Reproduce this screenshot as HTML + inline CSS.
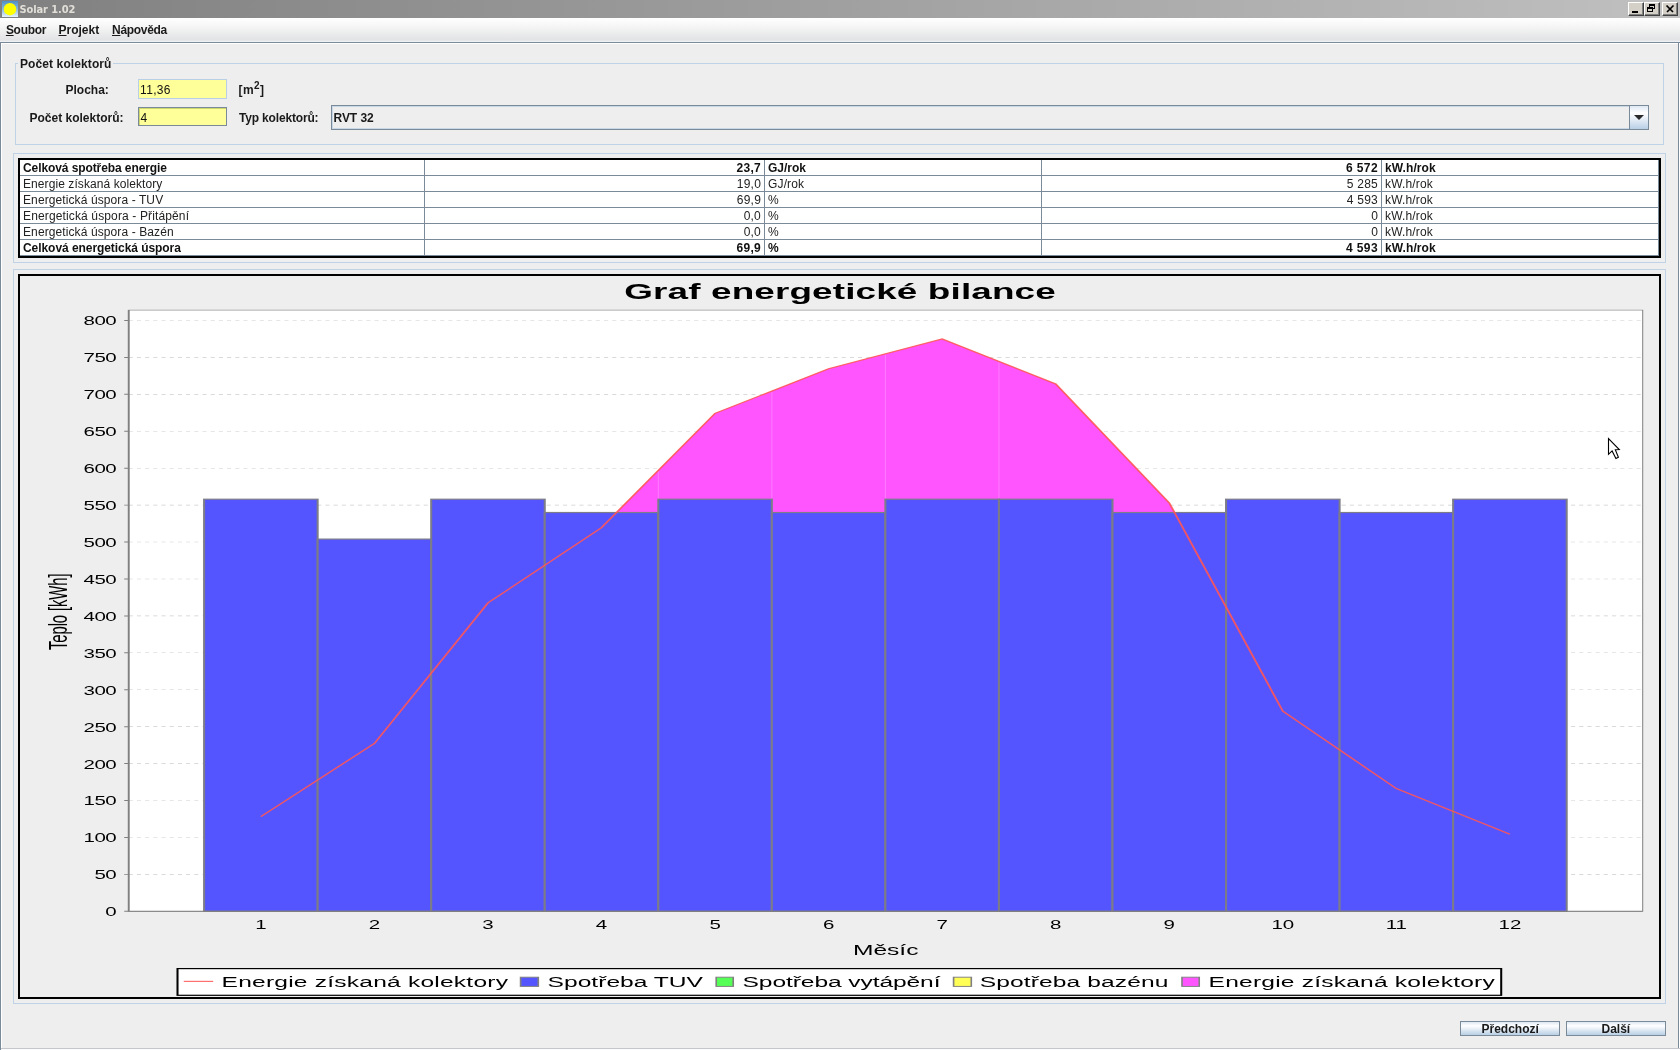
<!DOCTYPE html>
<html lang="cs"><head><meta charset="utf-8"><title>Solar 1.02</title>
<style>
html,body{margin:0;padding:0;background:#eee;}
body{width:1680px;height:1050px;overflow:hidden;position:relative;font-family:"Liberation Sans",sans-serif;font-size:12px;color:#000;}
#win{position:absolute;left:0;top:0;width:1680px;height:1050px;background:#eee;overflow:hidden;will-change:transform;}
.abs{position:absolute;}
.t{position:absolute;white-space:nowrap;line-height:14px;font-size:12px;color:#222;}
.b{font-weight:bold;color:#1a1a1a;}
#titlebar{position:absolute;left:0;top:0;width:1680px;height:18px;background:linear-gradient(to right,#808080 0%,#c0c0c0 100%);}
#titlebar .cap{position:absolute;left:19.5px;top:3px;line-height:14px;font-family:"DejaVu Sans Condensed","Liberation Sans",sans-serif;font-size:11px;font-weight:bold;color:#e2dfd8;white-space:nowrap;}
.wbtn{position:absolute;top:2px;width:16px;height:14px;background:#d4d0c8;box-sizing:border-box;border-top:1px solid #fff;border-left:1px solid #fff;border-right:1px solid #404040;border-bottom:1px solid #404040;}
.wbtn:after{content:"";position:absolute;left:0;top:0;right:0;bottom:0;border-right:1px solid #808080;border-bottom:1px solid #808080;}
.wbtn svg{position:absolute;left:0;top:0;}
#menubar{position:absolute;left:0;top:18px;width:1680px;height:24px;background:linear-gradient(to bottom,#ffffff 0%,#f4f4f4 40%,#e2e3e5 92%,#f2f5f8 100%);}
#menubar .t{top:5px;}
#menubar u{text-decoration:underline;text-decoration-thickness:1px;text-underline-offset:1px;}
#content{position:absolute;left:0;top:42px;width:1680px;height:1008px;box-sizing:border-box;background:#eee;border-top:1px solid #7a8a99;border-left:1px solid #7a8a99;}
.line{position:absolute;background:#b8cfe5;}
.panel{position:absolute;box-sizing:border-box;border:1px solid #bfd2e6;}
.field{position:absolute;box-sizing:border-box;background:#ffff99;}
.btn{position:absolute;box-sizing:border-box;border:1px solid #7a8a99;background:linear-gradient(to bottom,#dde8f3 0%,#ffffff 30%,#e6eef6 55%,#b8cfe5 100%);}
table.grid{position:absolute;border-collapse:separate;border-spacing:0;table-layout:fixed;background:#fff;}
table.grid td{box-sizing:border-box;height:16px;padding:1px 0 0 0;border-right:1px solid #7a8a99;border-bottom:1px solid #7a8a99;line-height:14px;font-size:12px;color:#222;white-space:nowrap;overflow:hidden;vertical-align:top;}
table.grid td.r{text-align:right;padding-right:3px;}
table.grid td.l{padding-left:3px;}
table.grid tr.b td{font-weight:bold;color:#111;}
</style></head>
<body>
<div id="win">
<div id="titlebar"><svg class="abs" style="left:2px;top:1px" width="16" height="16" viewBox="0 0 16 16"><defs><linearGradient id="sky" x1="0" y1="0" x2="0" y2="1"><stop offset="0" stop-color="#4f8fc4"/><stop offset="0.55" stop-color="#8fbde0"/><stop offset="1" stop-color="#e8f2fa"/></linearGradient></defs><rect width="16" height="16" fill="url(#sky)"/><circle cx="8" cy="8.2" r="6.2" fill="#ffff00"/></svg><span class="cap" id="cap" style="letter-spacing:-0.100px">Solar 1.02</span><div class="wbtn" style="left:1628px"><svg width="16" height="14"><rect x="3" y="8" width="6" height="2" fill="#000"/></svg></div><div class="wbtn" style="left:1644px"><svg width="16" height="14"><g transform="translate(-1,-1)" fill="none" stroke="#000" shape-rendering="crispEdges"><rect x="5.5" y="2.5" width="5" height="4"/><line x1="5" y1="3.5" x2="11" y2="3.5"/><rect x="3.5" y="5.5" width="5" height="4" fill="#d4d0c8"/><line x1="3" y1="6.5" x2="9" y2="6.5"/></g></svg></div><div class="wbtn" style="left:1662px"><svg width="16" height="14"><path d="M3.5 2.5 L10 9 M10.5 2.5 L4 9" stroke="#000" stroke-width="1.7" fill="none"/></svg></div></div>
<div id="menubar"><span class="t b" id="m1" style="left:5.9px;top:5px;letter-spacing:-0.300px;"><u>S</u>oubor</span><span class="t b" id="m2" style="left:58.5px;top:5px;"><u>P</u>rojekt</span><span class="t b" id="m3" style="left:112px;top:5px;letter-spacing:-0.300px;"><u>N</u>ápověda</span></div>
<div id="content"><div class="abs" style="left:0;top:0;width:1677px;height:1px;background:#fff"></div><div class="abs" style="left:0;top:0;width:1px;height:1005px;background:#fff"></div><div class="abs" style="left:1677px;top:0;width:1px;height:1006px;background:#7a8a99"></div><div class="abs" style="left:1678px;top:0;width:1px;height:1007px;background:#fff"></div><div class="abs" style="left:0;top:1005px;width:1679px;height:1px;background:#c3c7cb"></div><div class="abs" style="left:0;top:1006px;width:1679px;height:1px;background:#fbfbfb"></div></div>
<div class="panel" id="group" style="left:15px;top:63px;width:1649px;height:82px;"></div><div class="abs" style="left:18px;top:60px;width:95px;height:8px;background:#eee"></div><span class="t b" id="gt" style="left:20px;top:57px;letter-spacing:0.100px;">Počet kolektorů</span><span class="t b" id="l1" style="left:65.5px;top:83px;">Plocha:</span><span class="t b" id="l2" style="left:29.5px;top:111px;">Počet kolektorů:</span><div class="field" id="f1" style="left:138px;top:79px;width:89px;height:20px;border:1px solid #b8cfe5;"></div><span class="t" id="v1" style="left:140px;top:83px;letter-spacing:0.350px;color:#111;">11,36</span><div class="field" id="f2" style="left:138px;top:107px;width:89px;height:19px;border:1px solid #7a8a99;box-shadow:inset 1px 1px 0 #cfd86f;"></div><span class="t" id="v2" style="left:140.5px;top:111px;color:#111;">4</span><span class="t b" id="u1" style="left:238.5px;top:83px;letter-spacing:0.400px;">[m<span style="font-size:10px;position:relative;top:-5.5px;line-height:0">2</span>]</span><span class="t b" id="l3" style="left:239px;top:111px;letter-spacing:-0.170px;">Typ kolektorů:</span><div class="abs" id="combo" style="left:331px;top:105px;width:1318px;height:25px;box-sizing:border-box;border:1px solid #7a8a99;background:#eee;box-shadow:inset 1px 1px 0 #c9d8e7, inset -1px -1px 0 #c9d8e7;"></div><div class="abs" id="comboarrow" style="left:1629px;top:106px;width:19px;height:23px;box-sizing:border-box;border-left:1px solid #7a8a99;background:linear-gradient(to bottom,#dde8f3 0%,#ffffff 30%,#e8eff7 55%,#b8cfe5 100%);"><svg width="19" height="23" style="position:absolute;left:-1px;top:0"><path d="M5 9 L15 9 L10 14 Z" fill="#2a2a2a"/></svg></div><span class="t b" id="cv" style="left:333.5px;top:111px;letter-spacing:-0.050px;">RVT 32</span><div class="panel" id="p1" style="left:13px;top:153px;width:1653px;height:110px;"></div><div class="abs" id="tblborder" style="left:18px;top:158px;width:1643px;height:100px;box-sizing:border-box;border:2px solid #000;background:#fff;"></div><table class="grid" id="grid" style="left:20px;top:160px;width:1639px;"><colgroup><col style="width:405px"><col style="width:340px"><col style="width:277px"><col style="width:340px"><col style="width:277px"></colgroup><tr class=b><td class="l"><span id="r0a" style="letter-spacing:-0.090px">Celková spotřeba energie</span></td><td class="r"><span id="r0b" style="letter-spacing:0.300px">23,7</span></td><td class="l"><span id="r0c">GJ/rok</span></td><td class="r"><span id="r0d" style="letter-spacing:0.400px">6 572</span></td><td class="l"><span id="r0e" style="letter-spacing:0.100px">kW.h/rok</span></td></tr><tr><td class="l"><span id="r1a" style="letter-spacing:0.080px">Energie získaná kolektory</span></td><td class="r"><span id="r1b" style="letter-spacing:0.200px">19,0</span></td><td class="l"><span id="r1c" style="letter-spacing:0.150px">GJ/rok</span></td><td class="r"><span id="r1d" style="letter-spacing:0.250px">5 285</span></td><td class="l"><span id="r1e" style="letter-spacing:0.150px">kW.h/rok</span></td></tr><tr><td class="l"><span id="r2a" style="letter-spacing:0.100px">Energetická úspora - TUV</span></td><td class="r"><span id="r2b" style="letter-spacing:0.200px">69,9</span></td><td class="l"><span id="r2c">%</span></td><td class="r"><span id="r2d" style="letter-spacing:0.250px">4 593</span></td><td class="l"><span id="r2e" style="letter-spacing:0.150px">kW.h/rok</span></td></tr><tr><td class="l"><span id="r3a" style="letter-spacing:0.135px">Energetická úspora - Přitápění</span></td><td class="r"><span id="r3b" style="letter-spacing:0.200px">0,0</span></td><td class="l"><span id="r3c">%</span></td><td class="r"><span id="r3d">0</span></td><td class="l"><span id="r3e" style="letter-spacing:0.150px">kW.h/rok</span></td></tr><tr><td class="l"><span id="r4a" style="letter-spacing:0.100px">Energetická úspora - Bazén</span></td><td class="r"><span id="r4b" style="letter-spacing:0.200px">0,0</span></td><td class="l"><span id="r4c">%</span></td><td class="r"><span id="r4d">0</span></td><td class="l"><span id="r4e" style="letter-spacing:0.150px">kW.h/rok</span></td></tr><tr class=b><td class="l"><span id="r5a" style="letter-spacing:-0.060px">Celková energetická úspora</span></td><td class="r"><span id="r5b" style="letter-spacing:0.300px">69,9</span></td><td class="l"><span id="r5c">%</span></td><td class="r"><span id="r5d" style="letter-spacing:0.400px">4 593</span></td><td class="l"><span id="r5e" style="letter-spacing:0.100px">kW.h/rok</span></td></tr></table>
<div class="panel" id="p2" style="left:13px;top:269px;width:1653px;height:735px;"></div><div class="abs" id="chartborder" style="left:18px;top:274px;width:1643px;height:725px;box-sizing:border-box;border:2px solid #000;"></div><svg id="chart" class="abs" style="left:20px;top:276px" width="1639" height="721" viewBox="0 0 1639 721" font-family="'Liberation Sans',sans-serif">
<g transform="scale(2.04875,1.20167)">
<text x="294.96" y="19.14" font-size="18" font-weight="bold" textLength="210.57" lengthAdjust="spacing">Graf energetické bilance</text>
<rect x="53.06" y="28.38" width="738.99" height="500.30" fill="#fff"/>
<path d="M53.06 497.95H792.04M53.06 467.22H792.04M53.06 436.50H792.04M53.06 405.77H792.04M53.06 375.04H792.04M53.06 344.31H792.04M53.06 313.58H792.04M53.06 282.86H792.04M53.06 252.13H792.04M53.06 221.40H792.04M53.06 190.67H792.04M53.06 159.94H792.04M53.06 129.22H792.04M53.06 98.49H792.04M53.06 67.76H792.04M53.06 37.03H792.04" stroke="#c0c0c0" stroke-opacity="0.8" stroke-width="0.5" stroke-dasharray="2 2" fill="none"/>
<polygon points="291.16,196.82 339.27,114.26 394.69,77.23 450.12,52.43 505.54,89.87 560.96,188.82 563.52,196.82" fill="#ff55ff"/>
<path d="M311.56 162.32V196.82M366.98 96.24V196.82M422.40 65.33V196.82M477.83 71.65V196.82" stroke="#ffffff" stroke-opacity="0.22" stroke-width="0.5" fill="none"/>
<rect x="89.86" y="185.76" width="55.42" height="342.93" fill="#5555ff" stroke="#7c7c88" stroke-width="1"/>
<rect x="145.28" y="218.94" width="55.42" height="309.74" fill="#5555ff" stroke="#7c7c88" stroke-width="1"/>
<rect x="200.71" y="185.76" width="55.42" height="342.93" fill="#5555ff" stroke="#7c7c88" stroke-width="1"/>
<rect x="256.13" y="196.82" width="55.42" height="331.86" fill="#5555ff" stroke="#7c7c88" stroke-width="1"/>
<rect x="311.56" y="185.76" width="55.42" height="342.93" fill="#5555ff" stroke="#7c7c88" stroke-width="1"/>
<rect x="366.98" y="196.82" width="55.42" height="331.86" fill="#5555ff" stroke="#7c7c88" stroke-width="1"/>
<rect x="422.40" y="185.76" width="55.42" height="342.93" fill="#5555ff" stroke="#7c7c88" stroke-width="1"/>
<rect x="477.83" y="185.76" width="55.42" height="342.93" fill="#5555ff" stroke="#7c7c88" stroke-width="1"/>
<rect x="533.25" y="196.82" width="55.42" height="331.86" fill="#5555ff" stroke="#7c7c88" stroke-width="1"/>
<rect x="588.68" y="185.76" width="55.42" height="342.93" fill="#5555ff" stroke="#7c7c88" stroke-width="1"/>
<rect x="644.10" y="196.82" width="55.42" height="331.86" fill="#5555ff" stroke="#7c7c88" stroke-width="1"/>
<rect x="699.52" y="185.76" width="55.42" height="342.93" fill="#5555ff" stroke="#7c7c88" stroke-width="1"/>
<polyline points="117.57,449.87 173.00,388.96 228.42,272.04 283.84,209.38 339.27,114.26 394.69,77.23 450.12,52.43 505.54,89.87 560.96,188.82 616.39,362.16 671.81,426.57 727.24,464.60" fill="none" stroke="#ff5555" stroke-width="1" stroke-opacity="0.9"/>
<rect x="53.06" y="28.38" width="738.99" height="500.30" fill="none" stroke="#808080" stroke-width="0.5"/>
<path d="M53.06 28.38V528.68H792.04" fill="none" stroke="#808080" stroke-width="0.9"/>
<path d="M50.86 528.68H53.06M50.86 497.95H53.06M50.86 467.22H53.06M50.86 436.50H53.06M50.86 405.77H53.06M50.86 375.04H53.06M50.86 344.31H53.06M50.86 313.58H53.06M50.86 282.86H53.06M50.86 252.13H53.06M50.86 221.40H53.06M50.86 190.67H53.06M50.86 159.94H53.06M50.86 129.22H53.06M50.86 98.49H53.06M50.86 67.76H53.06M50.86 37.03H53.06" stroke="#808080" stroke-width="0.8" fill="none"/>
<text x="47.15" y="532.78" font-size="10" text-anchor="end" textLength="5.37" lengthAdjust="spacing">0</text>
<text x="47.15" y="502.05" font-size="10" text-anchor="end" textLength="10.73" lengthAdjust="spacing">50</text>
<text x="47.15" y="471.32" font-size="10" text-anchor="end" textLength="16.10" lengthAdjust="spacing">100</text>
<text x="47.15" y="440.60" font-size="10" text-anchor="end" textLength="16.10" lengthAdjust="spacing">150</text>
<text x="47.15" y="409.87" font-size="10" text-anchor="end" textLength="16.10" lengthAdjust="spacing">200</text>
<text x="47.15" y="379.14" font-size="10" text-anchor="end" textLength="16.10" lengthAdjust="spacing">250</text>
<text x="47.15" y="348.41" font-size="10" text-anchor="end" textLength="16.10" lengthAdjust="spacing">300</text>
<text x="47.15" y="317.68" font-size="10" text-anchor="end" textLength="16.10" lengthAdjust="spacing">350</text>
<text x="47.15" y="286.96" font-size="10" text-anchor="end" textLength="16.10" lengthAdjust="spacing">400</text>
<text x="47.15" y="256.23" font-size="10" text-anchor="end" textLength="16.10" lengthAdjust="spacing">450</text>
<text x="47.15" y="225.50" font-size="10" text-anchor="end" textLength="16.10" lengthAdjust="spacing">500</text>
<text x="47.15" y="194.77" font-size="10" text-anchor="end" textLength="16.10" lengthAdjust="spacing">550</text>
<text x="47.15" y="164.04" font-size="10" text-anchor="end" textLength="16.10" lengthAdjust="spacing">600</text>
<text x="47.15" y="133.32" font-size="10" text-anchor="end" textLength="16.10" lengthAdjust="spacing">650</text>
<text x="47.15" y="102.59" font-size="10" text-anchor="end" textLength="16.10" lengthAdjust="spacing">700</text>
<text x="47.15" y="71.86" font-size="10" text-anchor="end" textLength="16.10" lengthAdjust="spacing">750</text>
<text x="47.15" y="41.13" font-size="10" text-anchor="end" textLength="16.10" lengthAdjust="spacing">800</text>
<text x="117.57" y="543.24" font-size="10" text-anchor="middle">1</text>
<text x="173.00" y="543.24" font-size="10" text-anchor="middle">2</text>
<text x="228.42" y="543.24" font-size="10" text-anchor="middle">3</text>
<text x="283.84" y="543.24" font-size="10" text-anchor="middle">4</text>
<text x="339.27" y="543.24" font-size="10" text-anchor="middle">5</text>
<text x="394.69" y="543.24" font-size="10" text-anchor="middle">6</text>
<text x="450.12" y="543.24" font-size="10" text-anchor="middle">7</text>
<text x="505.54" y="543.24" font-size="10" text-anchor="middle">8</text>
<text x="560.96" y="543.24" font-size="10" text-anchor="middle">9</text>
<text x="616.39" y="543.24" font-size="10" text-anchor="middle">10</text>
<text x="671.81" y="543.24" font-size="10" text-anchor="middle">11</text>
<text x="727.24" y="543.24" font-size="10" text-anchor="middle">12</text>
<text x="422.55" y="565.21" font-size="12" text-anchor="middle">Měsíc</text>
<text transform="translate(22.89,279.36) rotate(-90)" font-size="12.4" text-anchor="middle" textLength="63.74" lengthAdjust="spacing">Teplo [kWh]</text>
<rect x="76.88" y="576.36" width="646.10" height="22.22" fill="#fff" stroke="#000" stroke-width="1"/>
<path d="M79.93 587.02H94.30" stroke="#ff5555" stroke-opacity="0.85" stroke-width="1" fill="none"/>
<text x="98.40" y="591.51" font-size="12" textLength="139.79" lengthAdjust="spacing">Energie získaná kolektory</text>
<rect x="244.34" y="583.52" width="8.64" height="7.66" fill="#5555ff" stroke="#808080" stroke-width="0.8"/>
<text x="257.52" y="591.51" font-size="12" textLength="75.85" lengthAdjust="spacing">Spotřeba TUV</text>
<rect x="339.82" y="583.52" width="8.30" height="7.66" fill="#55ff55" stroke="#808080" stroke-width="0.8"/>
<text x="352.70" y="591.51" font-size="12" textLength="96.60" lengthAdjust="spacing">Spotřeba vytápění</text>
<rect x="455.69" y="583.52" width="8.64" height="7.66" fill="#ffff55" stroke="#808080" stroke-width="0.8"/>
<text x="468.43" y="591.51" font-size="12" textLength="92.15" lengthAdjust="spacing">Spotřeba bazénu</text>
<rect x="567.18" y="583.52" width="8.40" height="7.66" fill="#ff55ff" stroke="#808080" stroke-width="0.8"/>
<text x="580.16" y="591.51" font-size="12" textLength="139.65" lengthAdjust="spacing">Energie získaná kolektory</text>
</g></svg>
<div class="btn" id="b1" style="left:1460px;top:1021px;width:100px;height:15px;"></div><span class="t b" id="bt1" style="left:1481.5px;top:1022px;">Předchozí</span><div class="btn" id="b2" style="left:1566px;top:1021px;width:100px;height:15px;"></div><span class="t b" id="bt2" style="left:1601.5px;top:1022px;">Další</span><svg class="abs" id="cursor" style="left:1607px;top:437px" width="14" height="24" viewBox="-1 -1 14 24"><path d="M0.5 0.5 L0.5 16.3 L4.1 12.9 L7.9 20.6 L10.4 19.3 L7.3 11.8 L11.3 11.5 Z" fill="#fff" stroke="#000" stroke-width="1.1" stroke-linejoin="miter"/></svg></div>
</body></html>
